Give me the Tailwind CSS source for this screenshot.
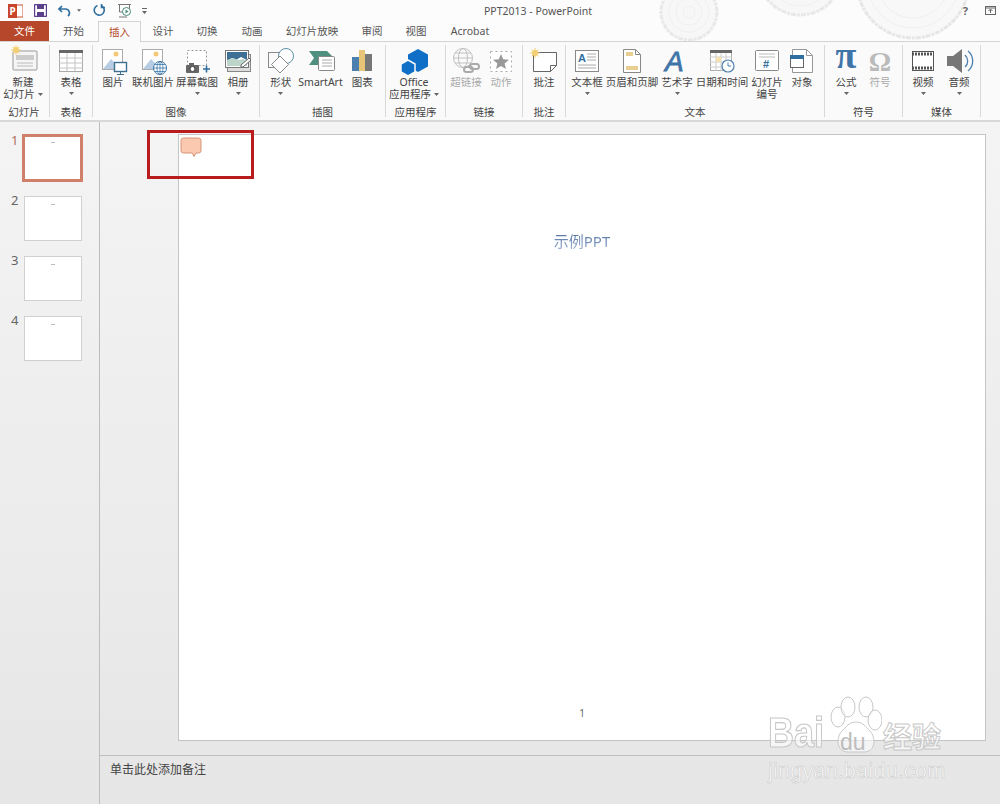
<!DOCTYPE html>
<html lang="zh"><head><meta charset="utf-8"><title>PPT2013 - PowerPoint</title>
<script src="https://cdn.jsdelivr.net/npm/@tailwindcss/browser@4"></script></head>
<body class="overflow-hidden">
<div class="relative w-[1000px] h-[804px] flex flex-col overflow-hidden bg-[#fcfcfc] text-[#444] text-[10.5px] leading-[12px] font-['Noto_Sans','Noto_Sans_CJK_SC',sans-serif]">

<!-- wood rings -->
<svg class="absolute left-[650px] top-0 w-[350px] h-[42px]" viewBox="0 0 350 42" fill="none">
<g stroke="#f0f0f0"><circle cx="39" cy="12" r="28" fill="#f7f7f7" stroke="#e8e8e8" stroke-width="3" stroke-dasharray="5 1 3 1"/><circle cx="39" cy="12" r="20"/><circle cx="39" cy="12" r="13"/><circle cx="39" cy="12" r="6"/>
<circle cx="150" cy="-27" r="42" fill="#f7f7f7" stroke="#e8e8e8" stroke-width="3" stroke-dasharray="5 1 3 1"/><circle cx="150" cy="-27" r="33"/>
<circle cx="263" cy="-18" r="56" fill="#f8f8f8" stroke="#e6e6e6" stroke-width="3" stroke-dasharray="5 1 3 1"/><circle cx="263" cy="-18" r="46"/><circle cx="263" cy="-18" r="36"/></g></svg>

<!-- title bar -->
<div class="relative h-[21px] flex items-center flex-none">
  <div class="w-[484px] flex-none flex items-center h-full">
    <svg class="ml-[8px] w-[15px] h-[14px]" viewBox="0 0 15 14"><rect x="4" y="1" width="11" height="12" fill="#fff" stroke="#c8553a"/><rect x="0" y="0" width="9" height="14" fill="#c8452a"/><text x="1.6" y="11" font-size="10" font-weight="700" fill="#fff">P</text></svg>
    <svg class="ml-[11px] w-[13px] h-[13px]" viewBox="0 0 13 13"><rect x=".5" y=".5" width="12" height="12" rx="1" fill="#fff" stroke="#5b3f8c" stroke-width="1.4"/><rect x="3" y="1" width="7" height="4" fill="#5b3f8c"/><rect x="3" y="8" width="7" height="4" fill="#5b3f8c"/></svg>
    <svg class="ml-[11px] w-[14px] h-[13px]" viewBox="0 0 14 13" fill="none"><path d="M4 2 1 5l3 3M1.5 5H8a4 4 0 0 1 2 7" stroke="#2f6f9f" stroke-width="1.7"/></svg>
    <svg class="ml-[5px] w-[4px] h-[3px]" viewBox="0 0 5 3"><path d="M0 0h5L2.500 3z" fill="#666"/></svg>
    <svg class="ml-[12px] w-[13px] h-[13px]" viewBox="0 0 13 13" fill="none"><path d="M4.500 1.500A5 5 0 1 0 9 2M8.500 0v3.500H12" stroke="#2f6f9f" stroke-width="1.6"/></svg>
    <svg class="ml-[12px] w-[15px] h-[15px]" viewBox="0 0 15 15" fill="none"><path d="M0 1.500h13M1.500 2v7h10V2M1 14h8" stroke="#777"/><circle cx="8.500" cy="8.500" r="4" fill="#fff" stroke="#4a8a7a"/><path d="M7.500 6.500v4l3-2z" fill="#4a8a7a"/></svg>
    <svg class="ml-[9px] w-[5px] h-[6px]" viewBox="0 0 5 6"><path d="M0 0h5v1H0zM0 3h5L2.500 6z" fill="#666"/></svg>
  </div>
  <div class="text-[#555] text-[10.5px]">PPT2013 - PowerPoint</div>
  <div class="ml-auto flex items-center">
    <span class="font-bold text-[11px] text-[#666] mr-[17px]">?</span>
    <svg class="mr-[4px] w-[11px] h-[9px]" viewBox="0 0 11 9" fill="none"><rect x=".5" y=".5" width="10" height="8" stroke="#666"/><path d="M.5 2h10M5.500 7V3.500M3.500 5l2-2 2 2" stroke="#666"/></svg>
  </div>
</div>

<!-- tabs -->
<div class="relative h-[21px] flex-none flex border-b border-[#d4d4d4] text-[10.5px] text-[#555]">
  <div class="w-[49px] h-[20px] bg-[#b7472a] text-white flex items-center justify-center">文件</div>
  <div class="w-[49px] flex items-center justify-center">开始</div>
  <div class="w-[43px] h-[21px] bg-[#fafafa] border border-b-0 border-[#d4d4d4] text-[#b7472a] flex items-center justify-center">插入</div>
  <div class="w-[44px] flex items-center justify-center">设计</div>
  <div class="w-[44px] flex items-center justify-center">切换</div>
  <div class="w-[46px] flex items-center justify-center">动画</div>
  <div class="w-[74px] flex items-center justify-center">幻灯片放映</div>
  <div class="w-[46px] flex items-center justify-center">审阅</div>
  <div class="w-[42px] flex items-center justify-center">视图</div>
  <div class="w-[66px] flex items-center justify-center">Acrobat</div>
</div>

<!-- ribbon -->
<div class="h-[80px] flex-none flex pt-[3px] bg-[#fafafa] border-b-2 border-[#d8d8d8] text-center">
  <!-- 幻灯片 -->
  <div class="w-[50px] h-[72px] border-r border-[#d8d8d8] flex flex-col">
    <div class="flex-1 flex">
      <div class="w-[46px] flex flex-col items-center">
        <svg class="w-[32px] h-[32px] -mb-px" viewBox="0 0 32 32"><rect x="6" y="6" width="24" height="19" rx="1" fill="#f5f5f5" stroke="#999"/><rect x="9" y="10" width="18" height="5" fill="#ccc"/><path d="M10 18h16M10 21h16" stroke="#bbb"/><circle cx="9" cy="5" r="3" fill="#f4cf72"/><path d="M9 0v10M4 5h10M5.500 1.500l7 7M12.500 1.500l-7 7" stroke="#f4cf72"/></svg>
        <div>新建</div>
        <div class="whitespace-nowrap flex items-center gap-[3px]">幻灯片<svg class="w-[5px] h-[3px]" viewBox="0 0 5 3"><path d="M0 0h5L2.500 3z" fill="#666"/></svg></div>
      </div>
    </div>
    <div class="h-[11px] pr-[1px]">幻灯片</div>
  </div>
  <!-- 表格 -->
  <div class="w-[43px] h-[72px] border-r border-[#d8d8d8] flex flex-col">
    <div class="flex-1 flex">
      <div class="w-[42px] flex flex-col items-center">
        <svg class="w-[32px] h-[32px] -mb-px" viewBox="0 0 32 32"><rect x="4.500" y="5.500" width="23" height="21" fill="#fff" stroke="#aaa"/><rect x="4" y="5" width="24" height="3" fill="#666"/><path d="M4 13h24M4 18h24M4 23h24M12 8v18M20 8v18" stroke="#c4c4c4"/></svg>
        <div>表格</div>
        <svg class="w-[5px] h-[3px] mt-[4px]" viewBox="0 0 5 3"><path d="M0 0h5L2.500 3z" fill="#666"/></svg>
      </div>
    </div>
    <div class="h-[11px]">表格</div>
  </div>
  <!-- 图像 -->
  <div class="w-[167px] h-[72px] border-r border-[#d8d8d8] flex flex-col">
    <div class="flex-1 flex">
      <div class="w-[40px] flex flex-col items-center">
        <svg class="w-[32px] h-[32px] -mb-px" viewBox="0 0 32 32"><rect x="5.500" y="4.500" width="20" height="20" fill="#fff" stroke="#aaa"/><path d="M6 24l8-10 5 5 3-2 3 7z" fill="#b7cde3"/><circle cx="19" cy="9" r="2.500" fill="#f2c879"/><rect x="17.500" y="17.500" width="12" height="9" fill="#fff" stroke="#3f6f8f" stroke-width="1.400"/><path d="M23.500 27v2M20 29.500h7" stroke="#3f6f8f"/></svg>
        <div class="whitespace-nowrap">图片</div>
      </div>
      <div class="w-[40px] flex flex-col items-center">
        <svg class="w-[32px] h-[32px] -mb-px" viewBox="0 0 32 32"><rect x="5.500" y="4.500" width="20" height="20" fill="#fff" stroke="#aaa"/><path d="M6 24l8-10 5 5 3-2 3 7z" fill="#b7cde3"/><circle cx="19" cy="9" r="2.500" fill="#f2c879"/><circle cx="23" cy="23" r="6.500" fill="#fff" stroke="#3a76a8"/><path d="M16.500 23h13M23 16.500v13M18 19.500h10M18 26.500h10" stroke="#3a76a8" stroke-width=".8"/><ellipse cx="23" cy="23" rx="3" ry="6.500" fill="none" stroke="#3a76a8" stroke-width=".8"/></svg>
        <div class="whitespace-nowrap">联机图片</div>
      </div>
      <div class="w-[48px] flex flex-col items-center">
        <svg class="w-[32px] h-[32px] -mb-px" viewBox="0 0 32 32"><rect x="6.500" y="5.500" width="19" height="15" fill="#fff" stroke="#999" stroke-dasharray="2 2"/><rect x="5" y="20" width="13" height="8" rx="1" fill="#666"/><rect x="8" y="18" width="5" height="3" fill="#666"/><circle cx="11.500" cy="24" r="2.500" fill="#fff" stroke="#444"/><path d="M22 24h7M25.500 20.500v7" stroke="#2f6f9f" stroke-width="1.600"/></svg>
        <div class="whitespace-nowrap">屏幕截图</div>
        <svg class="w-[5px] h-[3px] mt-[4px]" viewBox="0 0 5 3"><path d="M0 0h5L2.500 3z" fill="#666"/></svg>
      </div>
      <div class="w-[34px] flex flex-col items-center">
        <svg class="w-[32px] h-[32px] -mb-px" viewBox="0 0 32 32"><rect x="5.500" y="9.500" width="23" height="17" fill="#ddd" stroke="#888"/><rect x="3.500" y="5.500" width="23" height="17" fill="#fff" stroke="#777"/><path d="M5 7h20v8l-6-3-5 3-4-2-5 3z" fill="#3e7096"/><path d="M5 15l6-2 5 2 5-1 4 2v5H5z" fill="#bcd5c8"/><path d="M19 20l8-7 2 2-8 7h-2z" fill="#fff" stroke="#666"/></svg>
        <div class="whitespace-nowrap">相册</div>
        <svg class="w-[5px] h-[3px] mt-[4px]" viewBox="0 0 5 3"><path d="M0 0h5L2.500 3z" fill="#666"/></svg>
      </div>
    </div>
    <div class="h-[11px]">图像</div>
  </div>
  <!-- 插图 -->
  <div class="w-[126px] h-[72px] border-r border-[#d8d8d8] flex flex-col">
    <div class="flex-1 flex">
      <div class="w-[42px] flex flex-col items-center">
        <svg class="w-[32px] h-[32px] -mb-px" viewBox="0 0 32 32" fill="none"><rect x="3.500" y="7.500" width="15" height="15" stroke="#888"/><circle cx="21" cy="11" r="7.500" fill="#fff" stroke="#5d8fa8"/><path d="M15 11l8.500 8.500L15 28l-8.500-8.500z" fill="#fff" stroke="#888"/></svg>
        <div>形状</div>
        <svg class="w-[5px] h-[3px] mt-[4px]" viewBox="0 0 5 3"><path d="M0 0h5L2.500 3z" fill="#666"/></svg>
      </div>
      <div class="w-[38px] flex flex-col items-center">
        <svg class="w-[32px] h-[32px] -mb-px" viewBox="0 0 32 32"><path d="M4 6h18l7 7-7 7H4l5-7z" fill="#4f8f7f"/><rect x="13.500" y="11.500" width="16" height="14" rx="1" fill="#fff" stroke="#888"/><path d="M17 15h10M17 18h10M17 21h10" stroke="#aaa"/></svg>
        <div class="whitespace-nowrap">SmartArt</div>
      </div>
      <div class="w-[46px] flex flex-col items-center">
        <svg class="w-[32px] h-[32px] -mb-px" viewBox="0 0 32 32"><rect x="6" y="12" width="7" height="14" fill="#4a7fb0"/><rect x="13" y="5" width="6" height="21" fill="#e8c476"/><rect x="19" y="9" width="7" height="17" fill="#777"/></svg>
        <div>图表</div>
      </div>
    </div>
    <div class="h-[11px]">插图</div>
  </div>
  <!-- 应用程序 -->
  <div class="w-[60px] h-[72px] border-r border-[#d8d8d8] flex flex-col">
    <div class="flex-1 flex">
      <div class="w-[56px] flex flex-col items-center">
        <svg class="w-[32px] h-[32px] -mb-px" viewBox="0 0 32 32"><path d="M20 4l10 5.500v12L20 27 10 21.500v-12z" fill="#0f6fc6"/><path d="M10 15l7 4v8l-7 4-7-4v-8z" fill="#0f6fc6" stroke="#fafafa" stroke-width="1.500"/></svg>
        <div>Office</div>
        <div class="whitespace-nowrap flex items-center gap-[3px]">应用程序<svg class="w-[5px] h-[3px]" viewBox="0 0 5 3"><path d="M0 0h5L2.500 3z" fill="#666"/></svg></div>
      </div>
    </div>
    <div class="h-[11px]">应用程序</div>
  </div>
  <!-- 链接 -->
  <div class="w-[77px] h-[72px] border-r border-[#d8d8d8] flex flex-col">
    <div class="flex-1 flex text-[#aaa]">
      <div class="w-[40px] flex flex-col items-center">
        <svg class="w-[32px] h-[32px] -mb-px" viewBox="0 0 32 32" fill="none" stroke="#c0c0c0"><circle cx="13" cy="13" r="9.500"/><ellipse cx="13" cy="13" rx="4.500" ry="9.500"/><path d="M3.500 13h19M5 8h16M5 18h16"/><rect x="14" y="22" width="9" height="5" rx="2.500" stroke-width="2" stroke="#aaa"/><rect x="20" y="19" width="9" height="5" rx="2.500" stroke-width="2" stroke="#aaa"/></svg>
        <div class="whitespace-nowrap">超链接</div>
      </div>
      <div class="w-[30px] flex flex-col items-center">
        <svg class="w-[32px] h-[32px] -mb-px" viewBox="0 0 32 32"><rect x="5.500" y="6.500" width="21" height="20" fill="#fff" stroke="#aaa" stroke-dasharray="2 3"/><path d="M16 9l2.200 5.300 5.800.4-4.400 3.700 1.400 5.600-5-3-5 3 1.400-5.600L8 14.700l5.800-.4z" fill="#999"/></svg>
        <div>动作</div>
      </div>
    </div>
    <div class="h-[11px]">链接</div>
  </div>
  <!-- 批注 -->
  <div class="w-[43px] h-[72px] border-r border-[#d8d8d8] flex flex-col">
    <div class="flex-1 flex">
      <div class="w-[42px] flex flex-col items-center">
        <svg class="w-[32px] h-[32px] -mb-px" viewBox="0 0 32 32" fill="none"><path d="M5.500 7.500h23v13l-6 6h-17z" fill="#fff" stroke="#666"/><path d="M22.500 26.500v-6h6" stroke="#666"/><circle cx="7" cy="8" r="3" fill="#f4cf72"/><path d="M7 3v10M2 8h10M3.500 4.500l7 7M10.500 4.500l-7 7" stroke="#f4cf72"/></svg>
        <div>批注</div>
      </div>
    </div>
    <div class="h-[11px]">批注</div>
  </div>
  <!-- 文本 -->
  <div class="w-[259px] h-[72px] border-r border-[#d8d8d8] flex flex-col">
    <div class="flex-1 flex">
      <div class="w-[42px] flex flex-col items-center">
        <svg class="w-[32px] h-[32px] -mb-px" viewBox="0 0 32 32"><rect x="4.500" y="5.500" width="23" height="21" fill="#fff" stroke="#888"/><text x="7" y="17" font-size="11" font-weight="700" fill="#2f6f9f" font-family="Liberation Sans">A</text><path d="M16 9h9M16 12h9M16 15h9M7 20h18M7 23h18" stroke="#aaa"/></svg>
        <div class="whitespace-nowrap">文本框</div>
        <svg class="w-[5px] h-[3px] mt-[4px]" viewBox="0 0 5 3"><path d="M0 0h5L2.500 3z" fill="#666"/></svg>
      </div>
      <div class="w-[48px] flex flex-col items-center">
        <svg class="w-[32px] h-[32px] -mb-px" viewBox="0 0 32 32"><path d="M7.500 4.500h12l5 5v18h-17z" fill="#fff" stroke="#888"/><path d="M19.500 4.500v5h5" fill="none" stroke="#888"/><rect x="10" y="7" width="7" height="4" fill="#e8cf8f"/><rect x="10" y="21" width="12" height="4" fill="#e8cf8f"/></svg>
        <div class="whitespace-nowrap">页眉和页脚</div>
      </div>
      <div class="w-[42px] flex flex-col items-center">
        <svg class="w-[32px] h-[32px] -mb-px" viewBox="0 0 32 32"><text x="4" y="26" font-size="28" font-style="italic" fill="#3f74a8" stroke="#3f74a8" stroke-width=".8" font-family="Liberation Sans">A</text></svg>
        <div class="whitespace-nowrap">艺术字</div>
        <svg class="w-[5px] h-[3px] mt-[4px]" viewBox="0 0 5 3"><path d="M0 0h5L2.500 3z" fill="#666"/></svg>
      </div>
      <div class="w-[48px] flex flex-col items-center">
        <svg class="w-[32px] h-[32px] -mb-px" viewBox="0 0 32 32"><rect x="4.500" y="5.500" width="21" height="20" fill="#fff" stroke="#aaa"/><rect x="4" y="5" width="22" height="3" fill="#666"/><path d="M4 12h22M4 17h22M4 22h22M10 8v18M15 8v18M20 8v18" stroke="#ccc"/><rect x="10" y="12" width="5" height="5" fill="#f5e2b0"/><circle cx="22" cy="21" r="6" fill="#fff" stroke="#4a7fb0" stroke-width="1.200"/><path d="M22 17.500V21h3" fill="none" stroke="#4a7fb0"/></svg>
        <div class="whitespace-nowrap">日期和时间</div>
      </div>
      <div class="w-[42px] flex flex-col items-center">
        <svg class="w-[32px] h-[32px] -mb-px" viewBox="0 0 32 32"><rect x="4.500" y="5.500" width="23" height="20" rx="1" fill="#fff" stroke="#888"/><path d="M8 9h16M8 12h16" stroke="#bbb"/><text x="12" y="23" font-size="11" font-weight="700" fill="#2f6f9f" font-family="Liberation Sans">#</text></svg>
        <div class="whitespace-nowrap">幻灯片</div>
        <div>编号</div>
      </div>
      <div class="w-[28px] flex flex-col items-center">
        <svg class="w-[32px] h-[32px] -mb-px flex-none" viewBox="0 0 32 32"><path d="M6.500 4.500h14l6 6v17h-20z" fill="#fff" stroke="#999"/><path d="M20.500 4.500v6h6" fill="none" stroke="#999"/><rect x="4.500" y="10.500" width="13" height="12" fill="#fff" stroke="#666"/><rect x="4" y="10" width="14" height="4" fill="#2f6f9f"/></svg>
        <div>对象</div>
      </div>
    </div>
    <div class="h-[11px]">文本</div>
  </div>
  <!-- 符号 -->
  <div class="w-[78px] h-[72px] border-r border-[#d8d8d8] flex flex-col">
    <div class="flex-1 flex">
      <div class="w-[42px] flex flex-col items-center">
        <svg class="w-[32px] h-[32px] -mb-px overflow-visible" viewBox="0 0 32 32"><text x="16" y="23" text-anchor="middle" font-size="38" font-weight="700" fill="#3f74a8" font-family="Liberation Serif">π</text></svg>
        <div>公式</div>
        <svg class="w-[5px] h-[3px] mt-[4px]" viewBox="0 0 5 3"><path d="M0 0h5L2.500 3z" fill="#666"/></svg>
      </div>
      <div class="w-[26px] flex flex-col items-center text-[#aaa]">
        <svg class="w-[32px] h-[32px] -mb-px flex-none" viewBox="0 0 32 32"><text x="16" y="26" text-anchor="middle" font-size="28" font-weight="700" fill="#bbb" font-family="Liberation Serif">Ω</text></svg>
        <div>符号</div>
      </div>
    </div>
    <div class="h-[11px]">符号</div>
  </div>
  <!-- 媒体 -->
  <div class="w-[78px] h-[72px] border-r border-[#d8d8d8] flex flex-col">
    <div class="flex-1 flex">
      <div class="w-[40px] flex flex-col items-center">
        <svg class="w-[32px] h-[32px] -mb-px" viewBox="0 0 32 32"><rect x="5.500" y="6.500" width="21" height="19" fill="#fff" stroke="#555"/><path d="M5 9h22M5 23h22" stroke="#555" stroke-width="3" stroke-dasharray="2 1"/></svg>
        <div>视频</div>
        <svg class="w-[5px] h-[3px] mt-[4px]" viewBox="0 0 5 3"><path d="M0 0h5L2.500 3z" fill="#666"/></svg>
      </div>
      <div class="w-[32px] flex flex-col items-center">
        <svg class="w-[32px] h-[32px] -mb-px" viewBox="0 0 32 32" fill="none"><path d="M4 11h6l9-7v24l-9-7H4z" fill="#777"/><path d="M22 10a8 8 0 0 1 0 12M25 6a13 13 0 0 1 0 20" stroke="#4a7fb0" stroke-width="1.300"/></svg>
        <div>音频</div>
        <svg class="w-[5px] h-[3px] mt-[4px]" viewBox="0 0 5 3"><path d="M0 0h5L2.500 3z" fill="#666"/></svg>
      </div>
    </div>
    <div class="h-[11px]">媒体</div>
  </div>
</div>

<!-- work area -->
<div class="flex-1 min-h-0 flex bg-linear-to-b from-[#f4f4f4] to-[#e6e6e6]">
  <div class="w-[100px] flex-none border-r border-[#bdbdbd] pt-[12px] text-[13px] leading-[14px] text-[#666]">
    <div class="h-[62px] flex items-start">
      <span class="w-[22px] pl-[11px] text-[#b0705c] -mt-[1px]">1</span>
      <div class="w-[61px] h-[48px] bg-white border-[3px] border-[#d0806a] flex justify-center pt-[5px]"><div class="w-[4px] h-[1px] bg-[#bbb]"></div></div>
    </div>
    <div class="h-[60px] flex items-start">
      <span class="w-[24px] pl-[11px] -mt-[3px]">2</span>
      <div class="w-[58px] h-[45px] bg-white border border-[#d0d0d0] flex justify-center pt-[7px]"><div class="w-[4px] h-[1px] bg-[#bbb]"></div></div>
    </div>
    <div class="h-[60px] flex items-start">
      <span class="w-[24px] pl-[11px] -mt-[3px]">3</span>
      <div class="w-[58px] h-[45px] bg-white border border-[#d0d0d0] flex justify-center pt-[7px]"><div class="w-[4px] h-[1px] bg-[#bbb]"></div></div>
    </div>
    <div class="h-[60px] flex items-start">
      <span class="w-[24px] pl-[11px] -mt-[3px]">4</span>
      <div class="w-[58px] h-[45px] bg-white border border-[#d0d0d0] flex justify-center pt-[7px]"><div class="w-[4px] h-[1px] bg-[#bbb]"></div></div>
    </div>
  </div>
  <div class="flex-1 flex flex-col min-w-0">
    <div class="flex-1 pl-[78px] pt-[12px]">
      <div class="w-[808px] h-[607px] bg-white border border-[#c4c4c4] flex flex-col items-center">
        <div class="mt-[95px] text-[15px] leading-[22px] bg-linear-to-b from-[#48699b] to-[#9fb5d2] bg-clip-text text-transparent">示例PPT</div>
        <div class="mt-[455px] text-[10px] leading-[12px] text-[#666]">1</div>
      </div>
    </div>
    <div class="h-[49px] flex-none border-t border-[#bdbdbd] pl-[10px] pt-[6px] text-[12px] leading-[16px] text-[#444]">单击此处添加备注</div>
  </div>
</div>

<!-- comment marker and highlight -->
<svg class="absolute left-[180px] top-[137px] w-[22px] h-[21px]" viewBox="0 0 22 21"><path d="M3.500 1h15a2.500 2.500 0 0 1 2.500 2.500v10a2.500 2.500 0 0 1-2.500 2.500H16l-2 3.500-1.500-3.500h-9A2.500 2.500 0 0 1 1 13.500v-10A2.500 2.500 0 0 1 3.500 1z" fill="#fac9b0" stroke="#d49478"/></svg>
<div class="absolute left-[147px] top-[130px] w-[107px] h-[49px] border-[3px] border-[#b81c1c]"></div>

<!-- watermark -->
<div class="absolute left-[768px] top-[696px] w-[180px] h-[90px] text-white font-['Liberation_Sans','Noto_Sans_CJK_SC',sans-serif]">
  <svg class="absolute left-[62px] top-0 w-[52px] h-[58px]" viewBox="0 0 52 58" fill="rgba(255,255,255,.55)" stroke="#c8c8c8"><ellipse cx="8" cy="21" rx="7" ry="10"/><ellipse cx="18" cy="11" rx="7" ry="10"/><ellipse cx="36" cy="11" rx="7" ry="10"/><ellipse cx="45" cy="24" rx="7" ry="10"/><path d="M26 26c7 0 10 5 14 9 6 6 6 21-6 21H18C6 56 6 41 12 35c4-4 7-9 14-9z"/></svg>
  <div class="absolute left-0 top-[19px] text-[36px] leading-[36px] font-bold scale-y-120 [-webkit-text-stroke:1px_#c8c8c8] text-white/60">Bai</div>
  <div class="absolute left-[72px] top-[34px] text-[23px] leading-[24px] text-[#bdbdbd]">du</div>
  <div class="absolute left-[115px] top-[26px] text-[29px] leading-[32px] font-bold [-webkit-text-stroke:1px_#c8c8c8] text-white/60">经验</div>
  <div class="absolute left-0 top-[62px] text-[22px] leading-[26px] [-webkit-text-stroke:.5px_#c8c8c8] text-white/70">jingyan.baidu.com</div>
</div>
</div>
</body></html>
